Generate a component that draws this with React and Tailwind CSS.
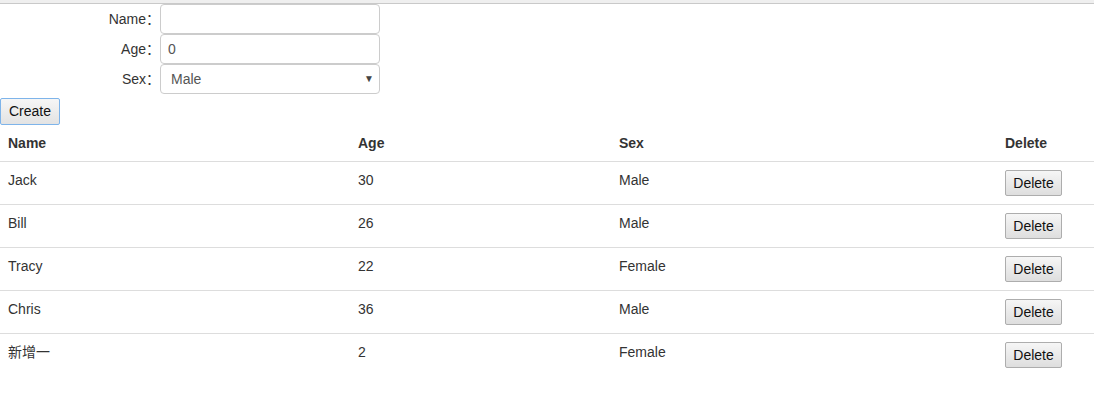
const PEOPLE = [
  { name: "Jack", age: 30, sex: "Male" },
  { name: "Bill", age: 26, sex: "Male" },
  { name: "Tracy", age: 22, sex: "Female" },
  { name: "Chris", age: 36, sex: "Male" },
  { name: "新增一", age: 2, sex: "Female" },
];

const FONT = "font-['Liberation_Sans','Noto_Sans_CJK_SC',sans-serif]";

function Field({ label, children }) {
  return (
    <div className="flex items-center h-[30px]">
      <label className="w-[160px] text-right text-[14px] text-[#333]">{label}：</label>
      <div className="w-[220px] h-[30px] relative">{children}</div>
    </div>
  );
}

export default function App() {
  return (
    <div className={`${FONT} bg-white min-h-[395px] text-[14px] text-[#333]`}>
      {/* top rule */}
      <div className="h-[4px] bg-[#efefef] border-b border-[#c9c9c9]" />

      {/* Form */}
      <div className="flex flex-col">
        <Field label="Name">
          <input className="w-full h-full border border-[#ccc] rounded-[4px] px-[7px] text-[#555] outline-none" />
        </Field>
        <Field label="Age">
          <input defaultValue="0" className="w-full h-full border border-[#ccc] rounded-[4px] px-[7px] text-[#555] outline-none" />
        </Field>
        <Field label="Sex">
          <select className="appearance-none w-full h-full border border-[#ccc] rounded-[4px] pl-[10px] text-[#555] outline-none bg-white">
            <option>Male</option>
            <option>Female</option>
          </select>
          <span className="absolute right-[6px] top-[7px] text-[10px] text-[#444] pointer-events-none">▼</span>
        </Field>
      </div>

      <div className="mt-[4px] h-[27px]">
        <button className="h-[27px] w-[60px] border border-[#7eb4ea] rounded-[2px] bg-gradient-to-b from-[#f6f6f6] to-[#e3e3e3] text-[14px] text-[#111]">
          Create
        </button>
      </div>

      {/* Table */}
      <table className="w-full border-collapse">
        <thead>
          <tr className="border-b border-[#ddd]">
            <th className="w-[350px] text-left font-bold px-[8px] py-[8px] leading-[20px]">Name</th>
            <th className="w-[261px] text-left font-bold px-[8px] py-[8px] leading-[20px]">Age</th>
            <th className="w-[386px] text-left font-bold px-[8px] py-[8px] leading-[20px]">Sex</th>
            <th className="text-left font-bold px-[8px] py-[8px] leading-[20px]">Delete</th>
          </tr>
        </thead>
        <tbody>
          {PEOPLE.map((p, i) => (
            <tr key={p.name} className={i > 0 ? "border-t border-[#ddd]" : ""}>
              <td className="align-top px-[8px] pt-[8px] leading-[20px]">{p.name}</td>
              <td className="align-top px-[8px] pt-[8px] leading-[20px]">{p.age}</td>
              <td className="align-top px-[8px] pt-[8px] leading-[20px]">{p.sex}</td>
              <td className="align-top px-[8px] pt-[8px] pb-[8px]">
                <button className="block h-[26px] w-[57px] border border-[#adadad] rounded-[2px] bg-gradient-to-b from-[#f6f6f6] to-[#dedede] text-[14px] text-[#111] leading-none">
                  Delete
                </button>
              </td>
            </tr>
          ))}
        </tbody>
      </table>
    </div>
  );
}
